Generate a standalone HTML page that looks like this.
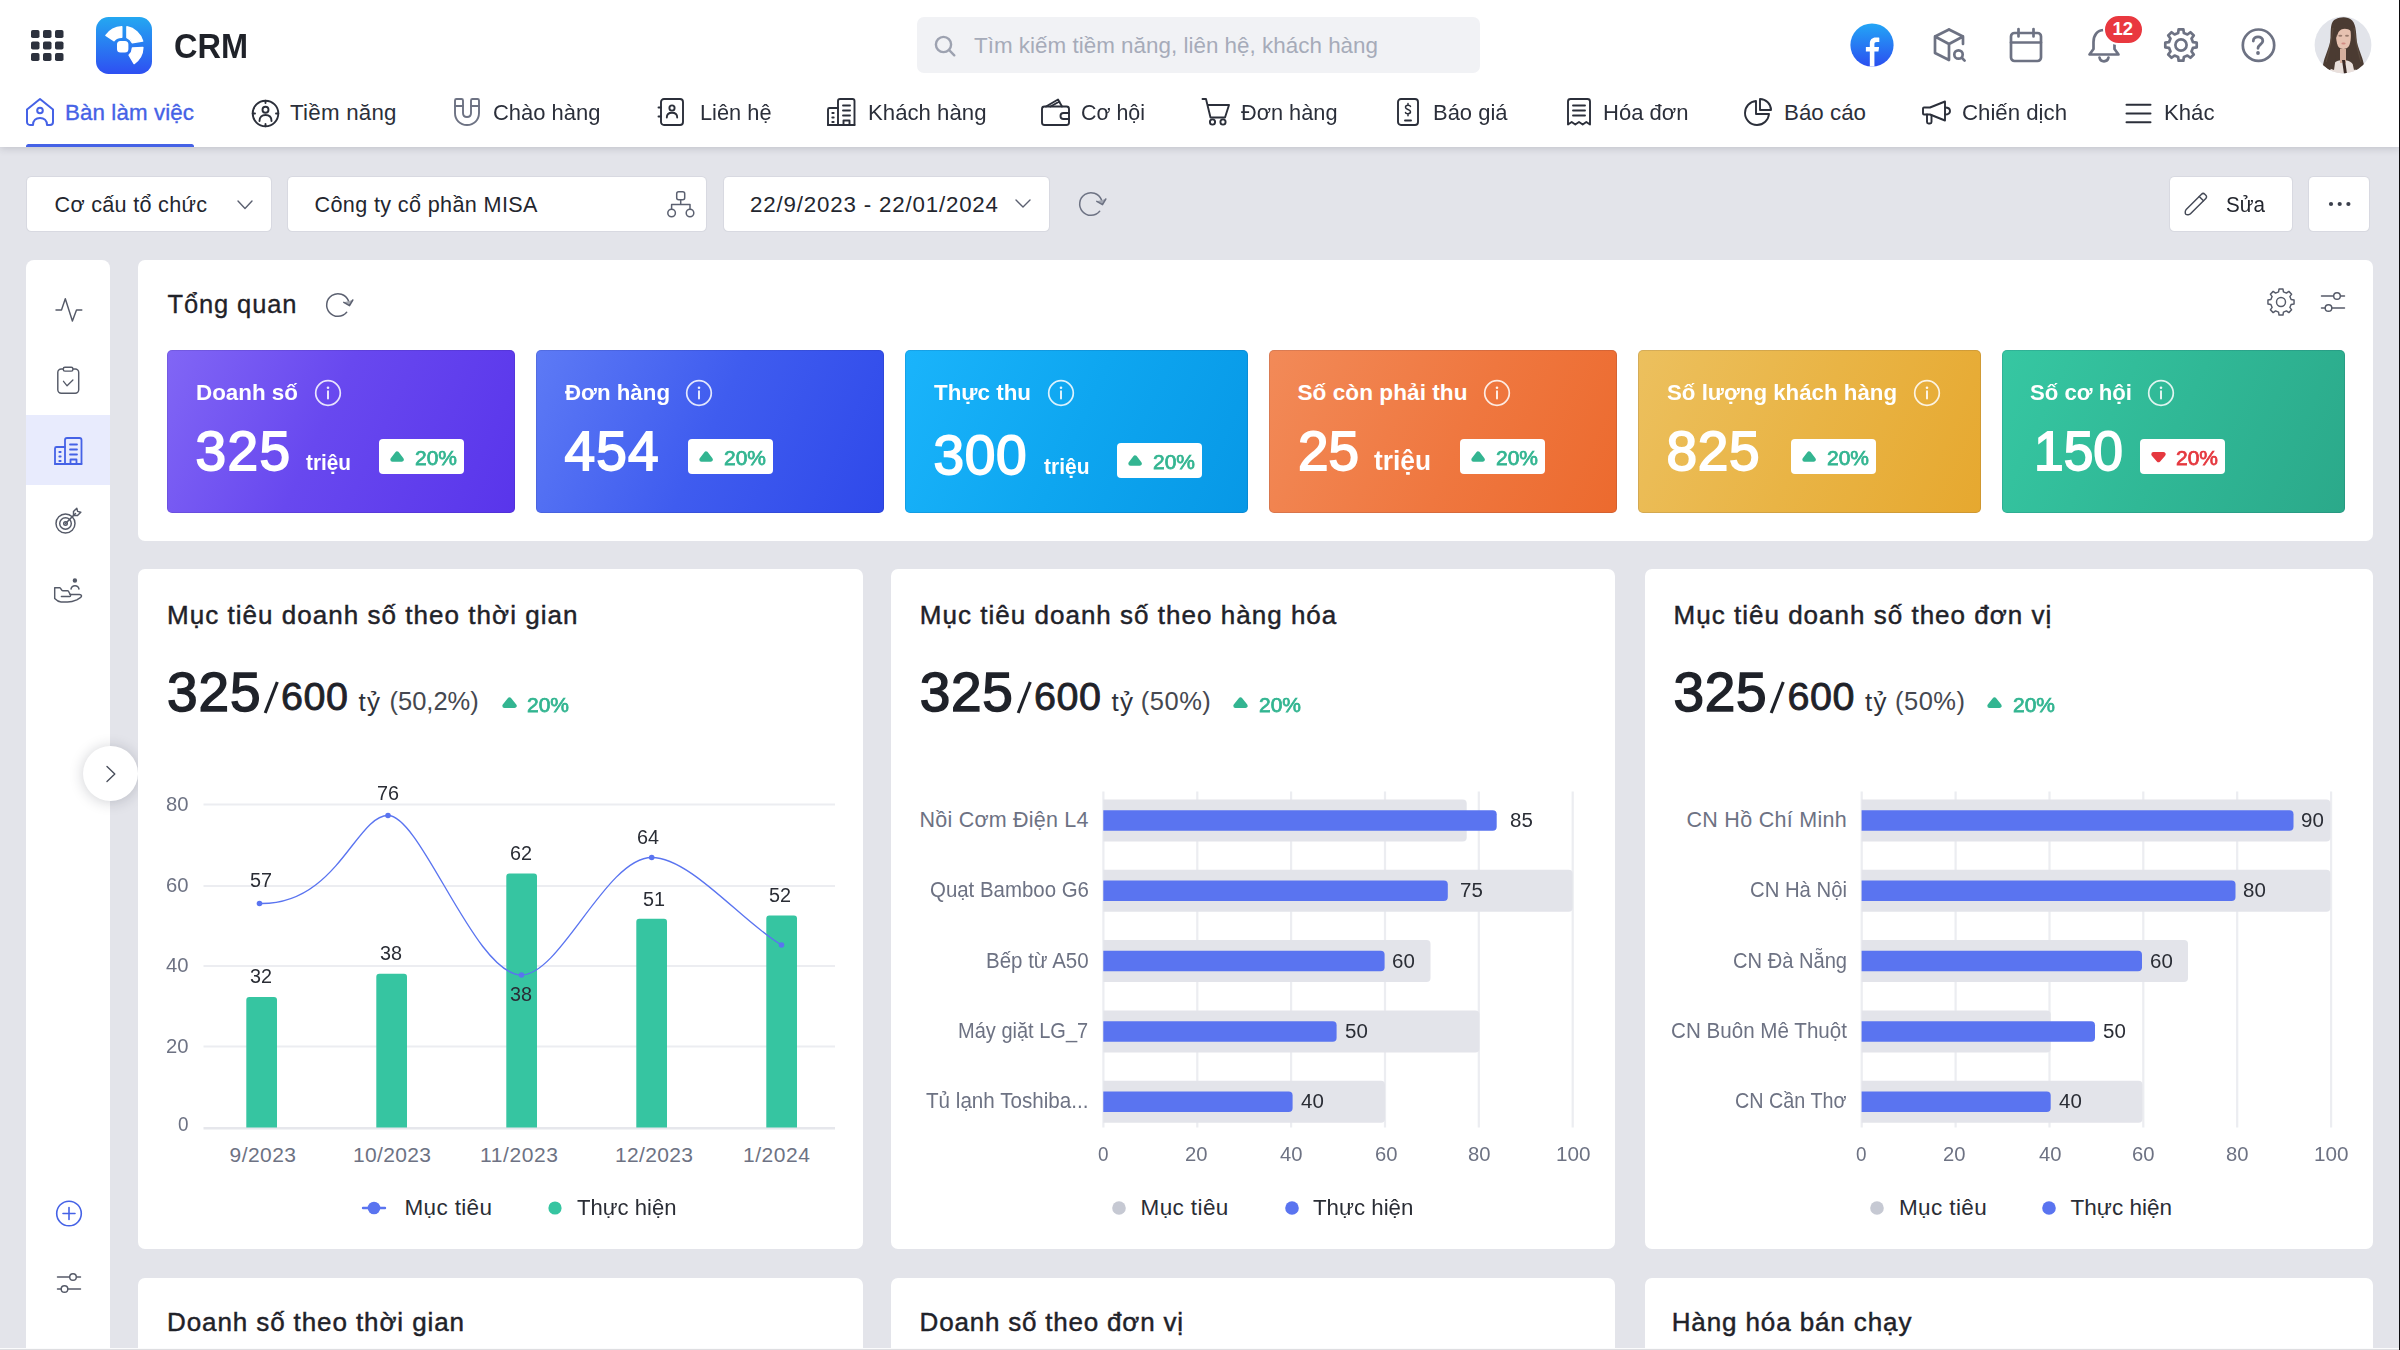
<!DOCTYPE html>
<html lang="vi"><head><meta charset="utf-8"><title>CRM</title><style>*{margin:0;padding:0;box-sizing:content-box}
html,body{width:2400px;height:1350px;overflow:hidden;background:#e3e4ea;font-family:"Liberation Sans",sans-serif}
#app{position:relative;width:2400px;height:1350px;overflow:hidden}
.t{position:absolute;white-space:nowrap;display:block;transform-origin:0 50%}
svg{display:block;overflow:visible}
</style></head><body><div id="app">
<aside><div style="position:absolute;left:26px;top:260px;width:84px;height:1100px;background:#fff;border-radius:8px 8px 0 0;"></div>
<div style="position:absolute;left:26px;top:415px;width:84px;height:69.5px;background:#e8ebfd;"></div>
<svg style="position:absolute;left:54px;top:296px;" width="30" height="28" viewBox="0 0 30 28" fill="none"><g stroke="#555a68" stroke-width="1.450" stroke-linecap="round" stroke-linejoin="round"><path d="M2 14 H7.500 L11.300 2.700 L18.400 25 L22.500 14 H27.800"/></g></svg>
<svg style="position:absolute;left:56px;top:365px;" width="26" height="30" viewBox="0 0 26 30" fill="none"><g stroke="#555a68" stroke-width="1.450" stroke-linecap="round" stroke-linejoin="round"><rect x="1.800" y="4" width="20.900" height="24.300" rx="3.500"/><rect x="7.300" y="2.300" width="9.600" height="3.800" rx="1.600" fill="#fff"/><path d="M7.500 16.300 L11.100 20.800 L16.900 15" stroke-width="1.300"/></g></svg>
<svg style="position:absolute;left:53px;top:435.5px;" width="31" height="30" viewBox="0 0 31 30" fill="none"><g stroke="#4562e6" stroke-width="1.8" stroke-linecap="round" stroke-linejoin="round"><path d="M2 28 V12.500 C2 11.500 2.600 11 3.500 11 H12"/><path d="M12 28 V4 C12 2.800 12.800 2 14 2 H26.500 C27.700 2 28.500 2.800 28.500 4 V28"/><path d="M2 28 H28.500"/>
<path d="M17 8.500 H24 M17 13.500 H24 M17 18.500 H24"/><path d="M17.500 28 V23.500 H23.500 V28"/><path d="M6.300 16 H7.700 M6.300 20.500 H7.700 M6.300 25 H7.700"/></g></svg>
<svg style="position:absolute;left:54px;top:505px;" width="30" height="30" viewBox="0 0 30 30" fill="none"><g stroke="#555a68" stroke-width="1.450" stroke-linecap="round" stroke-linejoin="round"><circle cx="11.500" cy="18.500" r="9.500"/><circle cx="11.500" cy="18.500" r="5.800"/><circle cx="11.500" cy="18.500" r="1.800"/><path d="M11.500 18.500 L21.500 8.500"/><path d="M19.500 10.500 V6.500 L22.800 3.200 L23.600 6.400 L26.800 7.200 L23.500 10.500Z"/></g></svg>
<svg style="position:absolute;left:53px;top:576px;" width="31" height="30" viewBox="0 0 31 30" fill="none"><g stroke="#555a68" stroke-width="1.450" stroke-linecap="round" stroke-linejoin="round"><circle cx="21.900" cy="4.400" r="1.500" fill="#555a68"/><path d="M18 13 C18.500 10.500 20 9.700 22 9.700 C24 9.700 25.500 10.500 26 13"/><path d="M1.700 11.700 H6.800 C8 11.700 8.200 14.800 9.800 14.800 H14.500 C16.500 14.800 16 18.500 18 18.500 H26.500 C28.800 18.500 29.200 20.600 27.400 21.600 L23.800 23.800 C20 25.500 17 26 14.500 26 H8 C5.500 26 3.500 24.500 1.700 22.600 Z"/><path d="M8.400 20.500 H16.800 C17.800 20.500 17.800 18.500 17 18.500"/></g></svg>
<svg style="position:absolute;left:54px;top:1199px;" width="30" height="30" viewBox="0 0 30 30" fill="none"><g stroke="#4562e6" stroke-width="1.600" stroke-linecap="round"><circle cx="15" cy="14.500" r="12.300"/><path d="M15 8.500 V20.500 M9 14.500 H21"/></g></svg>
<svg style="position:absolute;left:55.5px;top:1272px;" width="26" height="22" viewBox="0 0 26 22" fill="none"><g stroke="#555a68" stroke-width="1.45" stroke-linecap="round"><path d="M1.500 5 H13.500 M20.500 5 H24.500 M1.500 17 H5 M12 17 H24.500"/><circle cx="17" cy="5" r="3.300" fill="#fff"/><circle cx="8.500" cy="17" r="3.300" fill="#fff"/></g></svg>
<div style="position:absolute;left:82.5px;top:745.5px;width:55px;height:55px;background:#fff;border-radius:50%;box-shadow:0 1px 14px rgba(30,34,50,.21);"></div>
<svg style="position:absolute;left:105px;top:765px;" width="11" height="18" viewBox="0 0 11 18" fill="none"><path d="M2 1.500 L9.800 9 L2 16.500" stroke="#4a4f5c" stroke-width="1.400" stroke-linecap="round" stroke-linejoin="round"/></svg></aside>
<main><section><div style="position:absolute;left:27px;top:177px;width:244px;height:54px;background:#fff;border-radius:4.500px;box-shadow:0 0 0 1px rgba(200,203,212,.42);"></div>
<span class="t" style="left:54.50px;top:193.90px;font-size:21.6px;line-height:21.6px;color:#23262e;letter-spacing:0.297px;">Cơ cấu tổ chức</span>
<svg style="position:absolute;left:237px;top:200px;" width="16" height="9.5" viewBox="0 0 16 9.5" fill="none"><path d="M1 1 L8.0 8.5 L15 1" stroke="#5b6070" stroke-width="1.4" stroke-linecap="round" stroke-linejoin="round"/></svg>
<div style="position:absolute;left:288px;top:177px;width:418px;height:54px;background:#fff;border-radius:4.500px;box-shadow:0 0 0 1px rgba(200,203,212,.42);"></div>
<span class="t" style="left:314.50px;top:193.90px;font-size:21.6px;line-height:21.6px;color:#23262e;letter-spacing:0.365px;">Công ty cổ phần MISA</span>
<svg style="position:absolute;left:666px;top:190px;" width="30" height="29" viewBox="0 0 30 29" fill="none"><g stroke="#5b6070" stroke-width="1.500" stroke-linejoin="round"><rect x="10.700" y="1.800" width="8" height="8" rx="2"/><circle cx="5.600" cy="23" r="3.800"/><circle cx="24" cy="23" r="3.800"/><path d="M14.700 9.800 V14.500 M5.600 19.200 V14.500 H24 V19.200"/></g></svg>
<div style="position:absolute;left:724px;top:177px;width:325px;height:54px;background:#fff;border-radius:4.500px;box-shadow:0 0 0 1px rgba(200,203,212,.42);"></div>
<span class="t" style="left:750.00px;top:193.65px;font-size:22.3px;line-height:22.3px;color:#23262e;letter-spacing:0.828px;">22/9/2023 - 22/01/2024</span>
<svg style="position:absolute;left:1015px;top:198.5px;" width="16" height="9" viewBox="0 0 16 9" fill="none"><path d="M1 1 L8.0 8 L15 1" stroke="#5b6070" stroke-width="1.4" stroke-linecap="round" stroke-linejoin="round"/></svg>
<svg style="position:absolute;left:1077px;top:189.5px;" width="32" height="28" viewBox="0 0 32 28" fill="none"><g stroke="#6d7283" stroke-width="1.5" stroke-linecap="round" stroke-linejoin="round">
<path d="M22.660 21.260 A11.300 11.300 0 1 1 24.400 9.600"/><path d="M19.800 11.300 L25.500 14.700 L28.800 9" fill="#6d7283" fill-opacity=".55"/></g></svg>
<div style="position:absolute;left:2170px;top:177px;width:122px;height:54px;background:#fff;border-radius:4.500px;box-shadow:0 0 0 1px rgba(200,203,212,.42);"></div>
<svg style="position:absolute;left:2183px;top:190px;" width="27" height="27" viewBox="0 0 27 27" fill="none"><g stroke="#454a57" stroke-width="1.450" stroke-linejoin="round" stroke-linecap="round"><path d="M3.200 19.500 L18.500 4.200 C19.500 3.200 20.800 3.200 21.800 4.200 L22.800 5.200 C23.800 6.200 23.800 7.500 22.800 8.500 L7.500 23.800 C6.500 24.800 4 25.200 2.800 24.200 C1.800 23 2.200 20.500 3.200 19.500Z"/><path d="M16.200 6.500 L20.500 10.800"/></g></svg>
<span class="t" style="left:2225.50px;top:193.50px;font-size:22px;line-height:22px;color:#23262e;transform:scaleX(0.9366);">Sửa</span>
<div style="position:absolute;left:2309px;top:177px;width:60px;height:54px;background:#fff;border-radius:4.500px;box-shadow:0 0 0 1px rgba(200,203,212,.42);"></div>
<svg style="position:absolute;left:2328px;top:200.5px;" width="24" height="6" viewBox="0 0 24 6" fill="none"><g fill="#3a3f4c"><circle cx="3" cy="3" r="2.100"/><circle cx="11.700" cy="3" r="2.100"/><circle cx="20.400" cy="3" r="2.100"/></g></svg></section>
<section><div style="position:absolute;left:138px;top:260px;width:2235px;height:281px;background:#fff;border-radius:7px;"></div>
<span class="t" style="left:167.50px;top:292.45px;font-size:25.5px;line-height:25.5px;color:#1f2229;letter-spacing:0.883px;-webkit-text-stroke:0.3px #1f2229;">Tổng quan</span>
<svg style="position:absolute;left:324px;top:291.3px;" width="32" height="28" viewBox="0 0 32 28" fill="none"><g stroke="#5b6070" stroke-width="1.5" stroke-linecap="round" stroke-linejoin="round">
<path d="M22.660 21.260 A11.300 11.300 0 1 1 24.400 9.600"/><path d="M19.800 11.300 L25.500 14.700 L28.800 9" fill="#5b6070" fill-opacity=".55"/></g></svg>
<svg style="position:absolute;left:2266px;top:287px;" width="30" height="30" viewBox="0 0 30 30" fill="none"><path d="M13.04 1.95 L16.96 1.95 L17.43 4.89 L20.43 6.13 L22.84 4.38 L25.62 7.16 L23.87 9.57 L25.11 12.57 L28.05 13.04 L28.05 16.96 L25.11 17.43 L23.87 20.43 L25.62 22.84 L22.84 25.62 L20.43 23.87 L17.43 25.11 L16.96 28.05 L13.04 28.05 L12.57 25.11 L9.57 23.87 L7.16 25.62 L4.38 22.84 L6.13 20.43 L4.89 17.43 L1.95 16.96 L1.95 13.04 L4.89 12.57 L6.13 9.57 L4.38 7.16 L7.16 4.38 L9.57 6.13 L12.57 4.89Z" stroke="#555a68" stroke-width="1.45" stroke-linejoin="round"/><circle cx="15" cy="15" r="4.500" stroke="#555a68" stroke-width="1.450"/></svg>
<svg style="position:absolute;left:2319.5px;top:291px;" width="26" height="22" viewBox="0 0 26 22" fill="none"><g stroke="#555a68" stroke-width="1.45" stroke-linecap="round"><path d="M1.500 5 H13.500 M20.500 5 H24.500 M1.500 17 H5 M12 17 H24.500"/><circle cx="17" cy="5" r="3.300" fill="#fff"/><circle cx="8.500" cy="17" r="3.300" fill="#fff"/></g></svg>
<div style="position:absolute;left:167px;top:350px;width:348px;height:163px;background:linear-gradient(115deg,#8166f5 0%,#6848ef 45%,#5935eb 100%);border-radius:5px;box-shadow:inset 0 0 0 1px rgba(10,10,60,.10);"></div>
<span class="t" style="left:195.50px;top:381.80px;font-size:22.6px;line-height:22.6px;color:#fff;font-weight:700;transform:scaleX(0.9909);">Doanh số</span>
<svg style="position:absolute;left:314px;top:378.6px;" width="28" height="28" viewBox="0 0 28 28" fill="none"><circle cx="14" cy="14" r="12.300" stroke="#fff" stroke-opacity=".85" stroke-width="1.700"/><path d="M14 12.300 V19.600" stroke="#fff" stroke-opacity=".9" stroke-width="1.900" stroke-linecap="round"/><circle cx="14" cy="8.700" r="1.300" fill="#fff" fill-opacity=".9"/></svg>
<span class="t" style="left:195.50px;top:424.30px;font-size:55px;line-height:55px;color:#fff;letter-spacing:1.367px;-webkit-text-stroke:1.8px #fff;">325</span>
<span class="t" style="left:306.00px;top:452.10px;font-size:22px;line-height:22px;color:#fff;font-weight:700;transform:scaleX(0.9436);">triệu</span>
<div style="position:absolute;left:379px;top:439px;width:85px;height:35px;background:#fff;border-radius:4px;"></div><svg style="position:absolute;left:390px;top:451.3px;" width="14.2" height="10.7" viewBox="0 0 14.2 10.7" fill="none"><path d="M7.1 2.500 L11.7 8.5 H2.500Z" fill="#33b591" stroke="#33b591" stroke-width="4.400" stroke-linejoin="round"/></svg><span class="t" style="left:415.00px;top:447.20px;font-size:21px;line-height:21px;color:#33b591;transform:scaleX(0.9993);-webkit-text-stroke:0.75px #33b591;">20%</span>
<div style="position:absolute;left:536px;top:350px;width:348px;height:163px;background:linear-gradient(115deg,#5d7af5 0%,#3f5cef 50%,#2f49ea 100%);border-radius:5px;box-shadow:inset 0 0 0 1px rgba(10,10,60,.10);"></div>
<span class="t" style="left:564.50px;top:381.80px;font-size:22.6px;line-height:22.6px;color:#fff;font-weight:700;transform:scaleX(0.9865);">Đơn hàng</span>
<svg style="position:absolute;left:684.5px;top:378.6px;" width="28" height="28" viewBox="0 0 28 28" fill="none"><circle cx="14" cy="14" r="12.300" stroke="#fff" stroke-opacity=".85" stroke-width="1.700"/><path d="M14 12.300 V19.600" stroke="#fff" stroke-opacity=".9" stroke-width="1.900" stroke-linecap="round"/><circle cx="14" cy="8.700" r="1.300" fill="#fff" fill-opacity=".9"/></svg>
<span class="t" style="left:564.50px;top:424.30px;font-size:55px;line-height:55px;color:#fff;letter-spacing:1.117px;-webkit-text-stroke:1.8px #fff;">454</span>
<div style="position:absolute;left:688px;top:439px;width:85px;height:35px;background:#fff;border-radius:4px;"></div><svg style="position:absolute;left:699px;top:451.3px;" width="14.2" height="10.7" viewBox="0 0 14.2 10.7" fill="none"><path d="M7.1 2.500 L11.7 8.5 H2.500Z" fill="#33b591" stroke="#33b591" stroke-width="4.400" stroke-linejoin="round"/></svg><span class="t" style="left:724.00px;top:447.20px;font-size:21px;line-height:21px;color:#33b591;transform:scaleX(0.9993);-webkit-text-stroke:0.75px #33b591;">20%</span>
<div style="position:absolute;left:905px;top:350px;width:343px;height:163px;background:linear-gradient(115deg,#1ab4fb 0%,#0ea6f0 50%,#0798e6 100%);border-radius:5px;box-shadow:inset 0 0 0 1px rgba(10,10,60,.10);"></div>
<span class="t" style="left:933.50px;top:381.80px;font-size:22.6px;line-height:22.6px;color:#fff;font-weight:700;transform:scaleX(0.9904);">Thực thu</span>
<svg style="position:absolute;left:1046.7px;top:378.6px;" width="28" height="28" viewBox="0 0 28 28" fill="none"><circle cx="14" cy="14" r="12.300" stroke="#fff" stroke-opacity=".85" stroke-width="1.700"/><path d="M14 12.300 V19.600" stroke="#fff" stroke-opacity=".9" stroke-width="1.900" stroke-linecap="round"/><circle cx="14" cy="8.700" r="1.300" fill="#fff" fill-opacity=".9"/></svg>
<span class="t" style="left:933.50px;top:427.80px;font-size:55px;line-height:55px;color:#fff;letter-spacing:0.617px;-webkit-text-stroke:1.8px #fff;">300</span>
<span class="t" style="left:1044.00px;top:455.60px;font-size:22px;line-height:22px;color:#fff;font-weight:700;transform:scaleX(0.9541);">triệu</span>
<div style="position:absolute;left:1117px;top:442.5px;width:85px;height:35px;background:#fff;border-radius:4px;"></div><svg style="position:absolute;left:1128px;top:454.8px;" width="14.2" height="10.7" viewBox="0 0 14.2 10.7" fill="none"><path d="M7.1 2.500 L11.7 8.5 H2.500Z" fill="#33b591" stroke="#33b591" stroke-width="4.400" stroke-linejoin="round"/></svg><span class="t" style="left:1153.00px;top:450.70px;font-size:21px;line-height:21px;color:#33b591;transform:scaleX(0.9993);-webkit-text-stroke:0.75px #33b591;">20%</span>
<div style="position:absolute;left:1269px;top:350px;width:348px;height:163px;background:linear-gradient(115deg,#f28a58 0%,#ef773f 55%,#ec6a2e 100%);border-radius:5px;box-shadow:inset 0 0 0 1px rgba(10,10,60,.10);"></div>
<span class="t" style="left:1297.50px;top:381.80px;font-size:22.6px;line-height:22.6px;color:#fff;font-weight:700;letter-spacing:0.039px;">Số còn phải thu</span>
<svg style="position:absolute;left:1482.8px;top:378.6px;" width="28" height="28" viewBox="0 0 28 28" fill="none"><circle cx="14" cy="14" r="12.300" stroke="#fff" stroke-opacity=".85" stroke-width="1.700"/><path d="M14 12.300 V19.600" stroke="#fff" stroke-opacity=".9" stroke-width="1.900" stroke-linecap="round"/><circle cx="14" cy="8.700" r="1.300" fill="#fff" fill-opacity=".9"/></svg>
<span class="t" style="left:1297.50px;top:424.30px;font-size:55px;line-height:55px;color:#fff;transform:scaleX(0.9969);-webkit-text-stroke:1.8px #fff;">25</span>
<span class="t" style="left:1374.00px;top:448.10px;font-size:27px;line-height:27px;color:#fff;font-weight:700;transform:scaleX(0.9741);">triệu</span>
<div style="position:absolute;left:1460px;top:439px;width:85px;height:35px;background:#fff;border-radius:4px;"></div><svg style="position:absolute;left:1471px;top:451.3px;" width="14.2" height="10.7" viewBox="0 0 14.2 10.7" fill="none"><path d="M7.1 2.500 L11.7 8.5 H2.500Z" fill="#33b591" stroke="#33b591" stroke-width="4.400" stroke-linejoin="round"/></svg><span class="t" style="left:1496.00px;top:447.20px;font-size:21px;line-height:21px;color:#33b591;transform:scaleX(0.9993);-webkit-text-stroke:0.75px #33b591;">20%</span>
<div style="position:absolute;left:1638px;top:350px;width:343px;height:163px;background:linear-gradient(115deg,#ecc05e 0%,#e9b445 50%,#e6a82f 100%);border-radius:5px;box-shadow:inset 0 0 0 1px rgba(10,10,60,.10);"></div>
<span class="t" style="left:1666.50px;top:381.80px;font-size:22.6px;line-height:22.6px;color:#fff;font-weight:700;transform:scaleX(0.9859);">Số lượng khách hàng</span>
<svg style="position:absolute;left:1913.3px;top:378.6px;" width="28" height="28" viewBox="0 0 28 28" fill="none"><circle cx="14" cy="14" r="12.300" stroke="#fff" stroke-opacity=".85" stroke-width="1.700"/><path d="M14 12.300 V19.600" stroke="#fff" stroke-opacity=".9" stroke-width="1.900" stroke-linecap="round"/><circle cx="14" cy="8.700" r="1.300" fill="#fff" fill-opacity=".9"/></svg>
<span class="t" style="left:1666.50px;top:424.30px;font-size:55px;line-height:55px;color:#fff;letter-spacing:0.617px;-webkit-text-stroke:1.8px #fff;">825</span>
<div style="position:absolute;left:1790.5px;top:439px;width:85px;height:35px;background:#fff;border-radius:4px;"></div><svg style="position:absolute;left:1801.5px;top:451.3px;" width="14.2" height="10.7" viewBox="0 0 14.2 10.7" fill="none"><path d="M7.1 2.500 L11.7 8.5 H2.500Z" fill="#33b591" stroke="#33b591" stroke-width="4.400" stroke-linejoin="round"/></svg><span class="t" style="left:1826.50px;top:447.20px;font-size:21px;line-height:21px;color:#33b591;transform:scaleX(0.9993);-webkit-text-stroke:0.75px #33b591;">20%</span>
<div style="position:absolute;left:2002px;top:350px;width:343px;height:163px;background:linear-gradient(115deg,#36c7a2 0%,#30b896 50%,#2ba98a 100%);border-radius:5px;box-shadow:inset 0 0 0 1px rgba(10,10,60,.10);"></div>
<span class="t" style="left:2030.00px;top:381.80px;font-size:22.6px;line-height:22.6px;color:#fff;font-weight:700;transform:scaleX(0.9814);">Số cơ hội</span>
<svg style="position:absolute;left:2147px;top:378.6px;" width="28" height="28" viewBox="0 0 28 28" fill="none"><circle cx="14" cy="14" r="12.300" stroke="#fff" stroke-opacity=".85" stroke-width="1.700"/><path d="M14 12.300 V19.600" stroke="#fff" stroke-opacity=".9" stroke-width="1.900" stroke-linecap="round"/><circle cx="14" cy="8.700" r="1.300" fill="#fff" fill-opacity=".9"/></svg>
<span class="t" style="left:2033.50px;top:424.30px;font-size:55px;line-height:55px;color:#fff;transform:scaleX(0.9699);-webkit-text-stroke:1.8px #fff;">150</span>
<div style="position:absolute;left:2140px;top:439px;width:85px;height:35px;background:#fff;border-radius:4px;"></div><svg style="position:absolute;left:2151px;top:452px;" width="15" height="10.5" viewBox="0 0 15 10.5" fill="none"><path d="M7.5 8.0 L12.5 2.200 H2.500Z" fill="#e5383f" stroke="#e5383f" stroke-width="4.400" stroke-linejoin="round"/></svg><span class="t" style="left:2176.00px;top:447.20px;font-size:21px;line-height:21px;color:#e5383f;transform:scaleX(0.9993);-webkit-text-stroke:0.75px #e5383f;">20%</span></section>
<section><div style="position:absolute;left:138px;top:569px;width:724.5px;height:680px;background:#fff;border-radius:7px;"></div>
<span class="t" style="left:167.00px;top:601.60px;font-size:26px;line-height:26px;color:#1f2229;letter-spacing:1.035px;-webkit-text-stroke:0.45px #1f2229;">Mục tiêu doanh số theo thời gian</span>
<span class="t" style="left:167.00px;top:664.50px;font-size:55px;line-height:55px;color:#1f2229;letter-spacing:0.867px;-webkit-text-stroke:1.5px #1f2229;">325</span><svg style="position:absolute;left:261.5px;top:678px;" width="24" height="44" viewBox="0 0 24 44" fill="none"><path d="M3.200 35 L15.300 4" stroke="#1f2229" stroke-width="3.100" stroke-linecap="butt"/></svg><span class="t" style="left:281.00px;top:677.25px;font-size:39.5px;line-height:39.5px;color:#1f2229;letter-spacing:0.547px;-webkit-text-stroke:0.85px #1f2229;">600</span><span class="t" style="left:358.40px;top:689.00px;font-size:26px;line-height:26px;color:#2f323a;letter-spacing:1.266px;">tỷ</span><span class="t" style="left:389.50px;top:689.25px;font-size:25.5px;line-height:25.5px;color:#454850;">(50,2%)</span><svg style="position:absolute;left:501.7px;top:697.3px;" width="15" height="11" viewBox="0 0 15 11" fill="none"><path d="M7.5 2.500 L12.5 8.8 H2.500Z" fill="#33b591" stroke="#33b591" stroke-width="4.400" stroke-linejoin="round"/></svg><span class="t" style="left:527.30px;top:693.70px;font-size:21px;line-height:21px;color:#33b591;transform:scaleX(0.9993);-webkit-text-stroke:0.75px #33b591;">20%</span>
<svg style="position:absolute;left:138px;top:569px;" width="724" height="680" viewBox="0 0 724 680" fill="none"><rect x="65.5" y="234.5" width="631.500" height="2" fill="#ecedf1"/><rect x="65.5" y="316" width="631.500" height="2" fill="#ecedf1"/><rect x="65.5" y="396" width="631.500" height="2" fill="#ecedf1"/><rect x="65.5" y="476.5" width="631.500" height="2" fill="#ecedf1"/><rect x="65.5" y="558" width="631.500" height="2.500" fill="#e6e7ec"/><path d="M108.30000000000001 558.5 V431 Q108.30000000000001 428 111.30000000000001 428 H136.0 Q139.0 428 139.0 431 V558.5Z" fill="#36c5a1"/><path d="M238.3 558.5 V407.70000000000005 Q238.3 404.70000000000005 241.3 404.70000000000005 H266.0 Q269.0 404.70000000000005 269.0 407.70000000000005 V558.5Z" fill="#36c5a1"/><path d="M368.3 558.5 V307.5 Q368.3 304.5 371.3 304.5 H396.0 Q399.0 304.5 399.0 307.5 V558.5Z" fill="#36c5a1"/><path d="M498.29999999999995 558.5 V352.79999999999995 Q498.29999999999995 349.79999999999995 501.29999999999995 349.79999999999995 H526.0 Q529.0 349.79999999999995 529.0 352.79999999999995 V558.5Z" fill="#36c5a1"/><path d="M628.3 558.5 V349.5 Q628.3 346.5 631.3 346.5 H656.0 Q659.0 346.5 659.0 349.5 V558.5Z" fill="#36c5a1"/><path d="M121.5 334.5 C198.6 336.3 217.9 246.5 250 246.5 C283.4 246.5 336.8 406.0 383.5 406 C422.6 406.0 468.1 288.5 513.7 288.5 C552.6 288.5 604.6 353.5 643.5 376" stroke="#5a74f0" stroke-width="1.350" fill="none"/><circle cx="121.5" cy="334.5" r="2.800" fill="#5a74f0"/><circle cx="250" cy="246.5" r="2.800" fill="#5a74f0"/><circle cx="383.5" cy="406" r="2.800" fill="#5a74f0"/><circle cx="513.7" cy="288.5" r="2.800" fill="#5a74f0"/><circle cx="643.5" cy="376" r="2.800" fill="#5a74f0"/></svg>
<span class="t" style="left:166.00px;top:792.80px;font-size:21px;line-height:21px;color:#6d7283;transform:scaleX(0.9632);">80</span>
<span class="t" style="left:166.00px;top:873.80px;font-size:21px;line-height:21px;color:#6d7283;transform:scaleX(0.9632);">60</span>
<span class="t" style="left:166.00px;top:953.80px;font-size:21px;line-height:21px;color:#6d7283;transform:scaleX(0.9632);">40</span>
<span class="t" style="left:166.00px;top:1034.80px;font-size:21px;line-height:21px;color:#6d7283;transform:scaleX(0.9632);">20</span>
<span class="t" style="left:178.00px;top:1113.30px;font-size:21px;line-height:21px;color:#6d7283;transform:scaleX(0.8984);">0</span>
<span class="t" style="left:250.00px;top:869.65px;font-size:20.5px;line-height:20.5px;color:#2a2d35;transform:scaleX(0.9644);">57</span>
<span class="t" style="left:377.00px;top:782.65px;font-size:20.5px;line-height:20.5px;color:#2a2d35;transform:scaleX(0.9644);">76</span>
<span class="t" style="left:510.00px;top:842.65px;font-size:20.5px;line-height:20.5px;color:#2a2d35;transform:scaleX(0.9644);">62</span>
<span class="t" style="left:637.00px;top:827.15px;font-size:20.5px;line-height:20.5px;color:#2a2d35;transform:scaleX(0.9644);">64</span>
<span class="t" style="left:769.00px;top:885.25px;font-size:20.5px;line-height:20.5px;color:#2a2d35;transform:scaleX(0.9644);">52</span>
<span class="t" style="left:643.00px;top:888.95px;font-size:20.5px;line-height:20.5px;color:#2a2d35;transform:scaleX(0.9644);">51</span>
<span class="t" style="left:380.00px;top:943.35px;font-size:20.5px;line-height:20.5px;color:#2a2d35;transform:scaleX(0.9644);">38</span>
<span class="t" style="left:250.30px;top:965.65px;font-size:20.5px;line-height:20.5px;color:#2a2d35;transform:scaleX(0.9644);">32</span>
<span class="t" style="left:510.00px;top:983.85px;font-size:20.5px;line-height:20.5px;color:#2a2d35;transform:scaleX(0.9644);">38</span>
<span class="t" style="left:229.50px;top:1143.70px;font-size:21px;line-height:21px;color:#6d7283;letter-spacing:0.453px;">9/2023</span>
<span class="t" style="left:353.00px;top:1143.70px;font-size:21px;line-height:21px;color:#6d7283;letter-spacing:0.346px;">10/2023</span>
<span class="t" style="left:480.00px;top:1143.70px;font-size:21px;line-height:21px;color:#6d7283;letter-spacing:0.607px;">11/2023</span>
<span class="t" style="left:615.00px;top:1143.70px;font-size:21px;line-height:21px;color:#6d7283;letter-spacing:0.346px;">12/2023</span>
<span class="t" style="left:743.00px;top:1143.70px;font-size:21px;line-height:21px;color:#6d7283;letter-spacing:0.553px;">1/2024</span>
<svg style="position:absolute;left:360px;top:1200px;" width="28" height="16" viewBox="0 0 28 16" fill="none"><path d="M3 8 H25" stroke="#5a74f0" stroke-width="2.400" stroke-linecap="round"/><circle cx="14" cy="8" r="6.300" fill="#5a74f0"/></svg>
<span class="t" style="left:404.50px;top:1196.75px;font-size:22.5px;line-height:22.5px;color:#2a2d35;letter-spacing:0.350px;">Mục tiêu</span>
<svg style="position:absolute;left:548px;top:1201px;" width="14" height="14" viewBox="0 0 14 14" fill="none"><circle cx="7" cy="7" r="6.600" fill="#36c5a1"/></svg>
<span class="t" style="left:577.40px;top:1196.75px;font-size:22.5px;line-height:22.5px;color:#2a2d35;transform:scaleX(0.9815);">Thực hiện</span></section>
<section><div style="position:absolute;left:891px;top:569px;width:724px;height:680px;background:#fff;border-radius:7px;"></div>
<span class="t" style="left:919.80px;top:601.60px;font-size:26px;line-height:26px;color:#1f2229;letter-spacing:1.018px;-webkit-text-stroke:0.45px #1f2229;">Mục tiêu doanh số theo hàng hóa</span>
<span class="t" style="left:919.80px;top:664.50px;font-size:55px;line-height:55px;color:#1f2229;letter-spacing:0.617px;-webkit-text-stroke:1.5px #1f2229;">325</span><svg style="position:absolute;left:1014.5px;top:678px;" width="24" height="44" viewBox="0 0 24 44" fill="none"><path d="M3.200 35 L15.300 4" stroke="#1f2229" stroke-width="3.100" stroke-linecap="butt"/></svg><span class="t" style="left:1034.00px;top:677.25px;font-size:39.5px;line-height:39.5px;color:#1f2229;letter-spacing:0.547px;-webkit-text-stroke:0.85px #1f2229;">600</span><span class="t" style="left:1111.40px;top:689.00px;font-size:26px;line-height:26px;color:#2f323a;letter-spacing:1.266px;">tỷ</span><span class="t" style="left:1140.80px;top:689.25px;font-size:25.5px;line-height:25.5px;color:#454850;letter-spacing:0.492px;">(50%)</span><svg style="position:absolute;left:1233.3px;top:697.3px;" width="15" height="11" viewBox="0 0 15 11" fill="none"><path d="M7.5 2.500 L12.5 8.8 H2.500Z" fill="#33b591" stroke="#33b591" stroke-width="4.400" stroke-linejoin="round"/></svg><span class="t" style="left:1258.70px;top:693.70px;font-size:21px;line-height:21px;color:#33b591;transform:scaleX(0.9993);-webkit-text-stroke:0.75px #33b591;">20%</span>
<svg style="position:absolute;left:891px;top:569px;" width="724" height="680" viewBox="0 0 724 680" fill="none"><rect x="211.3" y="222.5" width="2.200" height="336" fill="#ecedf1"/><rect x="305.2" y="222.5" width="2.200" height="336" fill="#ecedf1"/><rect x="399.0" y="222.5" width="2.200" height="336" fill="#ecedf1"/><rect x="492.9" y="222.5" width="2.200" height="336" fill="#ecedf1"/><rect x="586.7" y="222.5" width="2.200" height="336" fill="#ecedf1"/><rect x="680.6" y="222.5" width="2.200" height="336" fill="#ecedf1"/><path d="M212.3 230.5 H571.7 Q575.7 230.5 575.7 234.5 V268.5 Q575.7 272.5 571.7 272.5 H212.3Z" fill="#e3e4ea"/><path d="M212.3 241.20000000000005 H601.7 Q605.7 241.20000000000005 605.7 245.20000000000005 V257.70000000000005 Q605.7 261.70000000000005 601.7 261.70000000000005 H212.3Z" fill="#5a74f0"/><path d="M212.3 300.79999999999995 H677.6 Q681.6 300.79999999999995 681.6 304.79999999999995 V338.79999999999995 Q681.6 342.79999999999995 677.6 342.79999999999995 H212.3Z" fill="#e3e4ea"/><path d="M212.3 311.5 H552.8 Q556.8 311.5 556.8 315.5 V328.0 Q556.8 332.0 552.8 332.0 H212.3Z" fill="#5a74f0"/><path d="M212.3 371 H535.5 Q539.5 371 539.5 375 V409 Q539.5 413 535.5 413 H212.3Z" fill="#e3e4ea"/><path d="M212.3 381.70000000000005 H489.6 Q493.6 381.70000000000005 493.6 385.70000000000005 V398.20000000000005 Q493.6 402.20000000000005 489.6 402.20000000000005 H212.3Z" fill="#5a74f0"/><path d="M212.3 441.5 H584.4 Q588.4 441.5 588.4 445.5 V479.5 Q588.4 483.5 584.4 483.5 H212.3Z" fill="#e3e4ea"/><path d="M212.3 452.20000000000005 H441.6 Q445.6 452.20000000000005 445.6 456.20000000000005 V468.70000000000005 Q445.6 472.70000000000005 441.6 472.70000000000005 H212.3Z" fill="#5a74f0"/><path d="M212.3 511.79999999999995 H490.0 Q494.0 511.79999999999995 494.0 515.8 V549.8 Q494.0 553.8 490.0 553.8 H212.3Z" fill="#e3e4ea"/><path d="M212.3 522.5 H397.6 Q401.6 522.5 401.6 526.5 V539.0 Q401.6 543.0 397.6 543.0 H212.3Z" fill="#5a74f0"/></svg>
<span class="t" style="left:919.50px;top:810.05px;font-size:21.5px;line-height:21.5px;color:#6d7283;letter-spacing:0.224px;">Nồi Cơm Điện L4</span>
<span class="t" style="left:929.50px;top:880.35px;font-size:21.5px;line-height:21.5px;color:#6d7283;transform:scaleX(0.9502);">Quạt Bamboo G6</span>
<span class="t" style="left:985.90px;top:950.55px;font-size:21.5px;line-height:21.5px;color:#6d7283;transform:scaleX(0.9532);">Bếp từ A50</span>
<span class="t" style="left:958.30px;top:1021.05px;font-size:21.5px;line-height:21.5px;color:#6d7283;transform:scaleX(0.9311);">Máy giặt LG_7</span>
<span class="t" style="left:926.00px;top:1091.35px;font-size:21.5px;line-height:21.5px;color:#6d7283;transform:scaleX(0.9597);">Tủ lạnh Toshiba...</span>
<span class="t" style="left:1509.70px;top:810.05px;font-size:20.5px;line-height:20.5px;color:#2a2d35;transform:scaleX(0.9995);">85</span>
<span class="t" style="left:1459.50px;top:880.35px;font-size:20.5px;line-height:20.5px;color:#2a2d35;transform:scaleX(0.9995);">75</span>
<span class="t" style="left:1392.40px;top:950.55px;font-size:20.5px;line-height:20.5px;color:#2a2d35;transform:scaleX(0.9995);">60</span>
<span class="t" style="left:1344.80px;top:1021.05px;font-size:20.5px;line-height:20.5px;color:#2a2d35;transform:scaleX(0.9995);">50</span>
<span class="t" style="left:1300.50px;top:1091.35px;font-size:20.5px;line-height:20.5px;color:#2a2d35;transform:scaleX(0.9995);">40</span>
<span class="t" style="left:1097.95px;top:1143.30px;font-size:21px;line-height:21px;color:#6d7283;transform:scaleX(0.8984);">0</span>
<span class="t" style="left:1185.45px;top:1143.30px;font-size:21px;line-height:21px;color:#6d7283;transform:scaleX(0.9632);">20</span>
<span class="t" style="left:1279.75px;top:1143.30px;font-size:21px;line-height:21px;color:#6d7283;transform:scaleX(0.9632);">40</span>
<span class="t" style="left:1374.75px;top:1143.30px;font-size:21px;line-height:21px;color:#6d7283;transform:scaleX(0.9632);">60</span>
<span class="t" style="left:1468.15px;top:1143.30px;font-size:21px;line-height:21px;color:#6d7283;transform:scaleX(0.9632);">80</span>
<span class="t" style="left:1556.25px;top:1143.30px;font-size:21px;line-height:21px;color:#6d7283;transform:scaleX(0.9844);">100</span>
<svg style="position:absolute;left:1112px;top:1200.6px;" width="14" height="14" viewBox="0 0 14 14" fill="none"><circle cx="7" cy="7" r="6.800" fill="#c6c9d3"/></svg>
<span class="t" style="left:1140.60px;top:1196.75px;font-size:22.5px;line-height:22.5px;color:#2a2d35;letter-spacing:0.379px;">Mục tiêu</span>
<svg style="position:absolute;left:1284.7px;top:1200.6px;" width="14" height="14" viewBox="0 0 14 14" fill="none"><circle cx="7" cy="7" r="6.800" fill="#5a74f0"/></svg>
<span class="t" style="left:1313.20px;top:1196.75px;font-size:22.5px;line-height:22.5px;color:#2a2d35;transform:scaleX(0.9904);">Thực hiện</span></section>
<section><div style="position:absolute;left:1645px;top:569px;width:728px;height:680px;background:#fff;border-radius:7px;"></div>
<span class="t" style="left:1673.60px;top:601.60px;font-size:26px;line-height:26px;color:#1f2229;letter-spacing:1.007px;-webkit-text-stroke:0.45px #1f2229;">Mục tiêu doanh số theo đơn vị</span>
<span class="t" style="left:1673.60px;top:664.50px;font-size:55px;line-height:55px;color:#1f2229;letter-spacing:0.617px;-webkit-text-stroke:1.5px #1f2229;">325</span><svg style="position:absolute;left:1768px;top:678px;" width="24" height="44" viewBox="0 0 24 44" fill="none"><path d="M3.200 35 L15.300 4" stroke="#1f2229" stroke-width="3.100" stroke-linecap="butt"/></svg><span class="t" style="left:1787.50px;top:677.25px;font-size:39.5px;line-height:39.5px;color:#1f2229;letter-spacing:0.547px;-webkit-text-stroke:0.85px #1f2229;">600</span><span class="t" style="left:1865.00px;top:689.00px;font-size:26px;line-height:26px;color:#2f323a;letter-spacing:1.266px;">tỷ</span><span class="t" style="left:1895.00px;top:689.25px;font-size:25.5px;line-height:25.5px;color:#454850;letter-spacing:0.492px;">(50%)</span><svg style="position:absolute;left:1987px;top:697.3px;" width="15" height="11" viewBox="0 0 15 11" fill="none"><path d="M7.5 2.500 L12.5 8.8 H2.500Z" fill="#33b591" stroke="#33b591" stroke-width="4.400" stroke-linejoin="round"/></svg><span class="t" style="left:2012.60px;top:693.70px;font-size:21px;line-height:21px;color:#33b591;transform:scaleX(0.9993);-webkit-text-stroke:0.75px #33b591;">20%</span>
<svg style="position:absolute;left:1645px;top:569px;" width="728" height="680" viewBox="0 0 728 680" fill="none"><rect x="215.6" y="222.5" width="2.200" height="336" fill="#ecedf1"/><rect x="309.5" y="222.5" width="2.200" height="336" fill="#ecedf1"/><rect x="403.4" y="222.5" width="2.200" height="336" fill="#ecedf1"/><rect x="497.2" y="222.5" width="2.200" height="336" fill="#ecedf1"/><rect x="591.1" y="222.5" width="2.200" height="336" fill="#ecedf1"/><rect x="685.0" y="222.5" width="2.200" height="336" fill="#ecedf1"/><path d="M216.6 230.5 H681.4 Q685.4 230.5 685.4 234.5 V268.5 Q685.4 272.5 681.4 272.5 H216.6Z" fill="#e3e4ea"/><path d="M216.6 241.20000000000005 H644.5 Q648.5 241.20000000000005 648.5 245.20000000000005 V257.70000000000005 Q648.5 261.70000000000005 644.5 261.70000000000005 H216.6Z" fill="#5a74f0"/><path d="M216.6 300.79999999999995 H681.4 Q685.4 300.79999999999995 685.4 304.79999999999995 V338.79999999999995 Q685.4 342.79999999999995 681.4 342.79999999999995 H216.6Z" fill="#e3e4ea"/><path d="M216.6 311.5 H586.5 Q590.5 311.5 590.5 315.5 V328.0 Q590.5 332.0 586.5 332.0 H216.6Z" fill="#5a74f0"/><path d="M216.6 371 H539.0 Q543.0 371 543.0 375 V409 Q543.0 413 539.0 413 H216.6Z" fill="#e3e4ea"/><path d="M216.6 381.70000000000005 H493.0 Q497.0 381.70000000000005 497.0 385.70000000000005 V398.20000000000005 Q497.0 402.20000000000005 493.0 402.20000000000005 H216.6Z" fill="#5a74f0"/><path d="M216.6 441.5 H401.7 Q405.7 441.5 405.7 445.5 V479.5 Q405.7 483.5 401.7 483.5 H216.6Z" fill="#e3e4ea"/><path d="M216.6 452.20000000000005 H446.0 Q450.0 452.20000000000005 450.0 456.20000000000005 V468.70000000000005 Q450.0 472.70000000000005 446.0 472.70000000000005 H216.6Z" fill="#5a74f0"/><path d="M216.6 511.79999999999995 H493.5 Q497.5 511.79999999999995 497.5 515.8 V549.8 Q497.5 553.8 493.5 553.8 H216.6Z" fill="#e3e4ea"/><path d="M216.6 522.5 H401.7 Q405.7 522.5 405.7 526.5 V539.0 Q405.7 543.0 401.7 543.0 H216.6Z" fill="#5a74f0"/></svg>
<span class="t" style="left:1686.40px;top:810.05px;font-size:21.5px;line-height:21.5px;color:#6d7283;letter-spacing:0.299px;">CN Hồ Chí Minh</span>
<span class="t" style="left:1749.80px;top:880.35px;font-size:21.5px;line-height:21.5px;color:#6d7283;transform:scaleX(0.9440);">CN Hà Nội</span>
<span class="t" style="left:1732.80px;top:950.55px;font-size:21.5px;line-height:21.5px;color:#6d7283;transform:scaleX(0.9353);">CN Đà Nẵng</span>
<span class="t" style="left:1670.80px;top:1021.05px;font-size:21.5px;line-height:21.5px;color:#6d7283;transform:scaleX(0.9583);">CN Buôn Mê Thuột</span>
<span class="t" style="left:1735.30px;top:1091.35px;font-size:21.5px;line-height:21.5px;color:#6d7283;transform:scaleX(0.9196);">CN Cần Thơ</span>
<span class="t" style="left:2300.70px;top:810.05px;font-size:20.5px;line-height:20.5px;color:#2a2d35;transform:scaleX(0.9995);">90</span>
<span class="t" style="left:2243.00px;top:880.35px;font-size:20.5px;line-height:20.5px;color:#2a2d35;transform:scaleX(0.9995);">80</span>
<span class="t" style="left:2150.00px;top:950.55px;font-size:20.5px;line-height:20.5px;color:#2a2d35;transform:scaleX(0.9995);">60</span>
<span class="t" style="left:2103.00px;top:1021.05px;font-size:20.5px;line-height:20.5px;color:#2a2d35;transform:scaleX(0.9995);">50</span>
<span class="t" style="left:2058.60px;top:1091.35px;font-size:20.5px;line-height:20.5px;color:#2a2d35;transform:scaleX(0.9995);">40</span>
<span class="t" style="left:1855.75px;top:1143.30px;font-size:21px;line-height:21px;color:#6d7283;transform:scaleX(0.8984);">0</span>
<span class="t" style="left:1943.15px;top:1143.30px;font-size:21px;line-height:21px;color:#6d7283;transform:scaleX(0.9632);">20</span>
<span class="t" style="left:2038.75px;top:1143.30px;font-size:21px;line-height:21px;color:#6d7283;transform:scaleX(0.9632);">40</span>
<span class="t" style="left:2132.25px;top:1143.30px;font-size:21px;line-height:21px;color:#6d7283;transform:scaleX(0.9632);">60</span>
<span class="t" style="left:2226.25px;top:1143.30px;font-size:21px;line-height:21px;color:#6d7283;transform:scaleX(0.9632);">80</span>
<span class="t" style="left:2314.05px;top:1143.30px;font-size:21px;line-height:21px;color:#6d7283;transform:scaleX(0.9844);">100</span>
<svg style="position:absolute;left:1869.9px;top:1200.6px;" width="14" height="14" viewBox="0 0 14 14" fill="none"><circle cx="7" cy="7" r="6.800" fill="#c6c9d3"/></svg>
<span class="t" style="left:1899.00px;top:1196.75px;font-size:22.5px;line-height:22.5px;color:#2a2d35;letter-spacing:0.379px;">Mục tiêu</span>
<svg style="position:absolute;left:2041.8000000000002px;top:1200.6px;" width="14" height="14" viewBox="0 0 14 14" fill="none"><circle cx="7" cy="7" r="6.800" fill="#5a74f0"/></svg>
<span class="t" style="left:2070.60px;top:1196.75px;font-size:22.5px;line-height:22.5px;color:#2a2d35;">Thực hiện</span></section>
<section><div style="position:absolute;left:138px;top:1278px;width:724.5px;height:80px;background:#fff;border-radius:7px 7px 0 0;"></div>
<span class="t" style="left:167.00px;top:1308.60px;font-size:26px;line-height:26px;color:#1f2229;letter-spacing:0.898px;-webkit-text-stroke:0.45px #1f2229;">Doanh số theo thời gian</span>
<div style="position:absolute;left:891px;top:1278px;width:724px;height:80px;background:#fff;border-radius:7px 7px 0 0;"></div>
<span class="t" style="left:919.60px;top:1308.60px;font-size:26px;line-height:26px;color:#1f2229;letter-spacing:0.793px;-webkit-text-stroke:0.45px #1f2229;">Doanh số theo đơn vị</span>
<div style="position:absolute;left:1645px;top:1278px;width:728px;height:80px;background:#fff;border-radius:7px 7px 0 0;"></div>
<span class="t" style="left:1671.70px;top:1308.60px;font-size:26px;line-height:26px;color:#1f2229;letter-spacing:0.887px;-webkit-text-stroke:0.45px #1f2229;">Hàng hóa bán chạy</span></section></main>
<header><div style="position:absolute;left:0px;top:0px;width:2400px;height:147.2px;background:#fff;box-shadow:0 1px 8px rgba(40,44,60,.20);"></div>
<svg style="position:absolute;left:31px;top:30px;" width="33" height="32" viewBox="0 0 33 32" fill="none"><g fill="#2c313d"><rect x="0" y="0.0" width="8.5" height="8" rx="1.8"/><rect x="12" y="0.0" width="8.5" height="8" rx="1.8"/><rect x="24" y="0.0" width="8.5" height="8" rx="1.8"/><rect x="0" y="11.5" width="8.5" height="8" rx="1.8"/><rect x="12" y="11.5" width="8.5" height="8" rx="1.8"/><rect x="24" y="11.5" width="8.5" height="8" rx="1.8"/><rect x="0" y="23.0" width="8.5" height="8" rx="1.8"/><rect x="12" y="23.0" width="8.5" height="8" rx="1.8"/><rect x="24" y="23.0" width="8.5" height="8" rx="1.8"/></g></svg>
<svg style="position:absolute;left:96px;top:17px;" width="56" height="57" viewBox="0 0 56 57" fill="none">
<defs><linearGradient id="lg1" x1="0" y1="0" x2="0" y2="1"><stop offset="0" stop-color="#24a8f1"/><stop offset="1" stop-color="#2e4ff2"/></linearGradient></defs>
<rect width="56" height="57" rx="12.500" fill="url(#lg1)"/>
<g fill="#fff" stroke="#fff" stroke-width="1.400" stroke-linejoin="round">
<path d="M25.800 9.700 A20.300 20.300 0 0 0 9.900 18.500 L17.900 23.700 A9.800 9.800 0 0 1 25.800 20.200 Z"/>
<path d="M30.900 9.700 A20.300 20.300 0 0 1 46.700 24.100 L36.200 25.800 A9.800 9.800 0 0 0 30.900 20.600 Z"/>
<path d="M46.900 30.500 A20.300 20.300 0 0 1 38.100 46.600 L33.100 38.100 A9.800 9.800 0 0 0 36.400 30.900 Z"/>
<rect x="21.700" y="24.800" width="10" height="10" rx="2.800"/>
</g></svg>
<span class="t" style="left:174.00px;top:27.50px;font-size:35px;line-height:35px;color:#1f2229;font-weight:700;transform:scaleX(0.9283);">CRM</span>
<div style="position:absolute;left:917px;top:17px;width:563px;height:56px;background:#f1f2f5;border-radius:7px;"></div>
<svg style="position:absolute;left:933px;top:34px;" width="24" height="24" viewBox="0 0 24 24" fill="none"><circle cx="10.5" cy="10.5" r="7.6" stroke="#9da2b0" stroke-width="2.4"/><path d="M16.2 16.2 L21.3 21.3" stroke="#9da2b0" stroke-width="2.4" stroke-linecap="round"/></svg>
<span class="t" style="left:974.00px;top:34.80px;font-size:22.4px;line-height:22.4px;color:#a6abb9;letter-spacing:0.020px;">Tìm kiếm tiềm năng, liên hệ, khách hàng</span>
<svg style="position:absolute;left:1850px;top:23px;" width="44" height="44" viewBox="0 0 44 44" fill="none">
<defs><linearGradient id="lg2" x1="0" y1="0" x2="0" y2="1"><stop offset="0" stop-color="#23a6f6"/><stop offset="1" stop-color="#2b4ff0"/></linearGradient><clipPath id="fbc"><circle cx="22" cy="22" r="21.600"/></clipPath></defs>
<circle cx="22" cy="22" r="21.600" fill="url(#lg2)"/>
<g clip-path="url(#fbc)"><path transform="translate(1.300 5.400) scale(.94)" d="M24.600 44 V24.600 h4.300 l.7-4.900 h-5 v-2.900 c0-1.500 .5-2.400 2.600-2.400 h2.600 V10 c-.5-.1-2-.2-3.800-.2 c-3.800 0-6.300 2.300-6.300 6.500 v3.400 h-4.200 v4.900 h4.200 V44 Z" fill="#fff"/></g></svg>
<svg style="position:absolute;left:1932px;top:27px;" width="36" height="36" viewBox="0 0 36 36" fill="none"><g stroke="#6d7283" stroke-width="2.700" stroke-linejoin="round" stroke-linecap="round">
<path d="M17 2.5 L31 9.5 V17 M17 2.5 L3 9.5 V26 L17 33 V17 M3 9.500 L17 17 L31 9.5"/>
<circle cx="26.5" cy="27.5" r="4.2"/><path d="M29.8 30.8 L32.6 33.6"/></g></svg>
<svg style="position:absolute;left:2009px;top:27px;" width="34" height="36" viewBox="0 0 34 36" fill="none"><g stroke="#6d7283" stroke-width="2.700" stroke-linecap="round" stroke-linejoin="round">
<rect x="2" y="6" width="30" height="28" rx="3.5"/><path d="M2 15.5 H32 M9.500 2 V9.5 M24.5 2 V9.5"/></g></svg>
<svg style="position:absolute;left:2087px;top:27px;" width="34" height="36" viewBox="0 0 34 36" fill="none"><g stroke="#6d7283" stroke-width="2.700" stroke-linecap="round" stroke-linejoin="round">
<path d="M17 3 C10 3 6.5 8.5 6.500 15 V22 L2.5 27.5 H31.5 L27.5 22 V15 C27.5 8.5 24 3 17 3 Z"/><path d="M12.500 30.500 C13 33 15 34.300 17 34.300 C19 34.300 21 33 21.500 30.500"/></g></svg>
<div style="position:absolute;left:2103px;top:14px;width:41px;height:31px;background:#e9383f;border-radius:15.5px;border:2px solid #fff;box-sizing:border-box;"></div>
<span class="t" style="left:2112.51px;top:20.45px;font-size:18.5px;line-height:18.5px;color:#fff;font-weight:700;">12</span>
<svg style="position:absolute;left:2163px;top:27.4px;" width="36" height="36" viewBox="0 0 36 36" fill="none"><path d="M15.64 2.28 L20.36 2.28 L20.87 6.04 L24.43 7.51 L27.45 5.21 L30.79 8.55 L28.49 11.57 L29.96 15.13 L33.72 15.64 L33.72 20.36 L29.96 20.87 L28.49 24.43 L30.79 27.45 L27.45 30.79 L24.43 28.49 L20.87 29.96 L20.36 33.72 L15.64 33.72 L15.13 29.96 L11.57 28.49 L8.55 30.79 L5.21 27.45 L7.51 24.43 L6.04 20.87 L2.28 20.36 L2.28 15.64 L6.04 15.13 L7.51 11.57 L5.21 8.55 L8.55 5.21 L11.57 7.51 L15.13 6.04Z" stroke="#6d7283" stroke-width="2.7" stroke-linejoin="round"/><circle cx="18" cy="18" r="5.600" stroke="#6d7283" stroke-width="2.700"/></svg>
<svg style="position:absolute;left:2240px;top:27px;" width="36" height="36" viewBox="0 0 36 36" fill="none"><circle cx="18.500" cy="18.200" r="15.700" stroke="#6d7283" stroke-width="2.700"/><path d="M13.300 14 C13.300 8.500 22.800 8.500 22.800 14 C22.800 17.300 18 17.500 18 21.300" stroke="#6d7283" stroke-width="2.800" stroke-linecap="round" fill="none"/><circle cx="18" cy="26" r="1.900" fill="#6d7283"/></svg>
<svg style="position:absolute;left:2314px;top:16px;" width="58" height="58" viewBox="0 0 58 58" fill="none">
<defs><clipPath id="av"><circle cx="29" cy="29" r="28.400"/></clipPath><filter id="avb" x="-10%" y="-10%" width="120%" height="120%"><feGaussianBlur stdDeviation=".75"/></filter></defs>
<g clip-path="url(#av)"><rect width="58" height="58" fill="#e2e4ea"/>
<g filter="url(#avb)">
<path d="M22 3 C16 5 17 14 16.500 22 C16 32 10 40 9 50 L15 54 L44 54 L50 50 C49 40 43 32 42.500 22 C42 12 41 4 34 2 C30 .5 25 1.500 22 3Z" fill="#4b3b31"/>
<path d="M16 58 C16 48 22 44 29 44 C36 44 42 48 42 58Z" fill="#e9dfdb"/>
<path d="M26 33 L26 47 L32 47 L32 33Z" fill="#d6b09e"/>
<path d="M22.500 13 C24 9 34 9 36 13 C37.500 18 37 26 35 30 C33 33.500 27 34 24.500 31 C22 27 21.500 18 22.500 13Z" fill="#e6c1b0"/>
<path d="M21.500 15 C21.500 8 27 6.500 32 8.500 C36 9.500 37 12 37 15 C33 11.500 27 12 24.500 16 C23.500 18 23 20 22.500 22Z" fill="#4b3b31"/>
<ellipse cx="26.300" cy="19.800" rx="2" ry="1" fill="#5a4034" opacity=".55"/><ellipse cx="33" cy="19.800" rx="2" ry="1" fill="#5a4034" opacity=".55"/>
<ellipse cx="29.500" cy="27.600" rx="2.200" ry="1" fill="#c9736f" opacity=".7"/>
<path d="M28 44 L30 58 L33 58 L31 44Z" fill="#3a2b25"/>
<path d="M9 50 C11 42 15 36 18 30 L22 40 L20 54Z M50 50 C48 42 44 36 41 30 L37 40 L40 54Z" fill="#4b3b31"/>
<path d="M19 12 C18 22 16 32 12 46 M40 12 C41 22 43 32 47 46" stroke="#6a574a" stroke-width="1.200" opacity=".5" fill="none"/>
</g></g></svg><nav><svg style="position:absolute;left:25px;top:97px;" width="30" height="30" viewBox="0 0 30 30" fill="none"><g stroke="#4562e6" stroke-width="2" stroke-linecap="round" stroke-linejoin="round"><path d="M2 12.500 L15 2 L28 12.500 V25 C28 26.700 26.800 28 25 28 H22 C22 23.500 19 21 15 21 C11 21 8 23.500 8 28 H5 C3.200 28 2 26.700 2 25Z"/><circle cx="15" cy="13.500" r="2.800"/></g></svg>
<span class="t" style="left:65.00px;top:101.65px;font-size:22.3px;line-height:22.3px;color:#4562e6;letter-spacing:0.122px;-webkit-text-stroke:0.35px #4562e6;">Bàn làm việc</span>
<div style="position:absolute;left:26px;top:144px;width:168px;height:3.3px;background:#4562e6;border-radius:2.500px 2.500px 0 0;"></div>
<svg style="position:absolute;left:251px;top:98.5px;" width="29" height="29" viewBox="0 0 29 29" fill="none"><g stroke="#2b2f3a" stroke-width="1.9" stroke-linecap="round" stroke-linejoin="round"><circle cx="14.500" cy="14.500" r="12.800"/><circle cx="14.500" cy="10.800" r="3"/><path d="M8.500 22 C8.500 17.800 11 16 14.500 16 C18 16 20.500 17.800 20.500 22"/><path d="M14.500 1.700 V4 M14.500 25 V27.300 M1.700 14.500 H4 M25 14.500 H27.300"/></g></svg>
<span class="t" style="left:290.00px;top:101.65px;font-size:22.3px;line-height:22.3px;color:#2b2f3a;letter-spacing:0.246px;">Tiềm năng</span>
<svg style="position:absolute;left:453px;top:97px;" width="28" height="30" viewBox="0 0 28 30" fill="none"><g stroke="#6d7283" stroke-width="1.900" stroke-linecap="round" stroke-linejoin="round"><path d="M2 3.500 C2 2.500 2.700 2 3.500 2 H8.500 C9.300 2 10 2.500 10 3.500 V16 C10 18.500 11.800 20 14 20 C16.200 20 18 18.500 18 16 V3.500 C18 2.500 18.700 2 19.500 2 H24.500 C25.300 2 26 2.500 26 3.500 V16 C26 23 21 28 14 28 C7 28 2 23 2 16Z"/><path d="M2 9 H10 M18 9 H26"/></g></svg>
<span class="t" style="left:492.50px;top:101.65px;font-size:22.3px;line-height:22.3px;color:#2b2f3a;transform:scaleX(0.9852);">Chào hàng</span>
<svg style="position:absolute;left:657px;top:97px;" width="28" height="30" viewBox="0 0 28 30" fill="none"><g stroke="#2b2f3a" stroke-width="1.9" stroke-linecap="round" stroke-linejoin="round"><rect x="4" y="2" width="22" height="26" rx="3"/><path d="M1.500 10.500 H4 M1.500 19.500 H4"/><circle cx="15" cy="11" r="2.600"/><path d="M9.800 20.500 C9.800 17 12 15.800 15 15.800 C18 15.800 20.200 17 20.200 20.500"/></g></svg>
<span class="t" style="left:700.00px;top:101.65px;font-size:22.3px;line-height:22.3px;color:#2b2f3a;transform:scaleX(0.9774);">Liên hệ</span>
<svg style="position:absolute;left:826px;top:97px;" width="31" height="30" viewBox="0 0 31 30" fill="none"><g stroke="#2b2f3a" stroke-width="1.9" stroke-linecap="round" stroke-linejoin="round"><path d="M2 28 V12.500 C2 11.500 2.600 11 3.500 11 H12"/><path d="M12 28 V4 C12 2.800 12.800 2 14 2 H26.500 C27.700 2 28.500 2.800 28.500 4 V28"/><path d="M2 28 H28.500"/>
<path d="M17 8.500 H24 M17 13.500 H24 M17 18.500 H24"/><path d="M17.500 28 V23.500 H23.500 V28"/><path d="M6.300 16 H7.700 M6.300 20.500 H7.700 M6.300 25 H7.700"/></g></svg>
<span class="t" style="left:867.50px;top:101.65px;font-size:22.3px;line-height:22.3px;color:#2b2f3a;transform:scaleX(0.9955);">Khách hàng</span>
<svg style="position:absolute;left:1040px;top:97px;" width="31" height="30" viewBox="0 0 31 30" fill="none"><g stroke="#2b2f3a" stroke-width="1.9" stroke-linecap="round" stroke-linejoin="round"><path d="M6 9.500 L18 2.500 L22 9.500 M10.500 9.500 L19.500 4.500"/><rect x="2" y="9.500" width="27" height="18.500" rx="2.500"/><path d="M29 16 H23.500 C21.500 16 20.500 17.500 20.500 19 C20.500 20.500 21.500 22 23.500 22 H29"/></g></svg>
<span class="t" style="left:1081.00px;top:101.65px;font-size:22.3px;line-height:22.3px;color:#2b2f3a;transform:scaleX(0.9597);">Cơ hội</span>
<svg style="position:absolute;left:1201px;top:97px;" width="30" height="30" viewBox="0 0 30 30" fill="none"><g stroke="#2b2f3a" stroke-width="1.9" stroke-linecap="round" stroke-linejoin="round"><path d="M1.500 2 H5 L9.500 20.500 H24 L28 8 H6.500"/><circle cx="11.500" cy="25" r="2.600"/><circle cx="22" cy="25" r="2.600"/></g></svg>
<span class="t" style="left:1241.00px;top:101.65px;font-size:22.3px;line-height:22.3px;color:#2b2f3a;transform:scaleX(0.9755);">Đơn hàng</span>
<svg style="position:absolute;left:1396px;top:97px;" width="24" height="30" viewBox="0 0 24 30" fill="none"><g stroke="#2b2f3a" stroke-width="1.9" stroke-linecap="round" stroke-linejoin="round"><rect x="2" y="2" width="20" height="26" rx="3"/><path d="M9 23.500 H15"/><path d="M14.500 9.500 C14.500 8 9.500 7.500 9.500 10.300 C9.500 13 14.500 12 14.500 14.800 C14.500 17.500 9.500 17 9.500 15.500 M12 6.500 V8 M12 17.300 V18.800" stroke-width="1.500"/></g></svg>
<span class="t" style="left:1433.00px;top:101.65px;font-size:22.3px;line-height:22.3px;color:#2b2f3a;transform:scaleX(0.9851);">Báo giá</span>
<svg style="position:absolute;left:1566px;top:97px;" width="26" height="30" viewBox="0 0 26 30" fill="none"><g stroke="#2b2f3a" stroke-width="1.9" stroke-linecap="round" stroke-linejoin="round"><path d="M2 27.500 V4.500 C2 3 3 2 4.500 2 H21.500 C23 2 24 3 24 4.500 V27.500 L20.300 25 L16.700 27.500 L13 25 L9.300 27.500 L5.700 25Z"/><path d="M7 8.500 H19 M7 13.500 H19 M7 18.500 H19"/></g></svg>
<span class="t" style="left:1603.00px;top:101.65px;font-size:22.3px;line-height:22.3px;color:#2b2f3a;transform:scaleX(0.9881);">Hóa đơn</span>
<svg style="position:absolute;left:1743px;top:97px;" width="31" height="30" viewBox="0 0 31 30" fill="none"><g stroke="#2b2f3a" stroke-width="1.9" stroke-linecap="round" stroke-linejoin="round"><path d="M13 4 C7 4.500 2 9.500 2 16 C2 22.600 7.400 28 14 28 C20.500 28 25.500 23 26 17 H13Z"/><path d="M17 2 V13 H28 C28 7 23 2 17 2Z"/></g></svg>
<span class="t" style="left:1784.00px;top:101.65px;font-size:22.3px;line-height:22.3px;color:#2b2f3a;letter-spacing:0.029px;">Báo cáo</span>
<svg style="position:absolute;left:1921px;top:99px;" width="32" height="27" viewBox="0 0 32 27" fill="none"><g stroke="#2b2f3a" stroke-width="1.9" stroke-linecap="round" stroke-linejoin="round"><path d="M3 8.500 H9 L24 2.500 V21.500 L9 15.500 H3 C2.300 15.500 2 15 2 14.500 V9.500 C2 9 2.300 8.500 3 8.500Z"/><path d="M6 15.500 V23 C6 24 6.500 24.500 7.500 24.500 H9 C10 24.500 10.500 24 10.500 23 V16"/><path d="M24 8.500 C27 8.500 29 10 29 12 C29 14 27 15.500 24 15.500"/></g></svg>
<span class="t" style="left:1962.00px;top:101.65px;font-size:22.3px;line-height:22.3px;color:#2b2f3a;transform:scaleX(0.9966);">Chiến dịch</span>
<svg style="position:absolute;left:2125px;top:102px;" width="27" height="23" viewBox="0 0 27 23" fill="none"><g stroke="#2b2f3a" stroke-width="2" stroke-linecap="round"><path d="M1.500 2.800 H25.500 M1.500 11.500 H25.500 M1.500 20.300 H25.500"/></g></svg>
<span class="t" style="left:2164.00px;top:101.65px;font-size:22.3px;line-height:22.3px;color:#2b2f3a;transform:scaleX(0.9935);">Khác</span></nav></header>
<div style="position:absolute;left:2398.600px;top:0;width:1.400px;height:1350px;background:#0c0c0e"></div>
<div style="position:absolute;left:0;top:1348px;width:2399px;height:1px;background:#fbfbfc"></div>
<div style="position:absolute;left:0;top:1349px;width:2399px;height:1px;background:#dedee1"></div>
</div></body></html>
